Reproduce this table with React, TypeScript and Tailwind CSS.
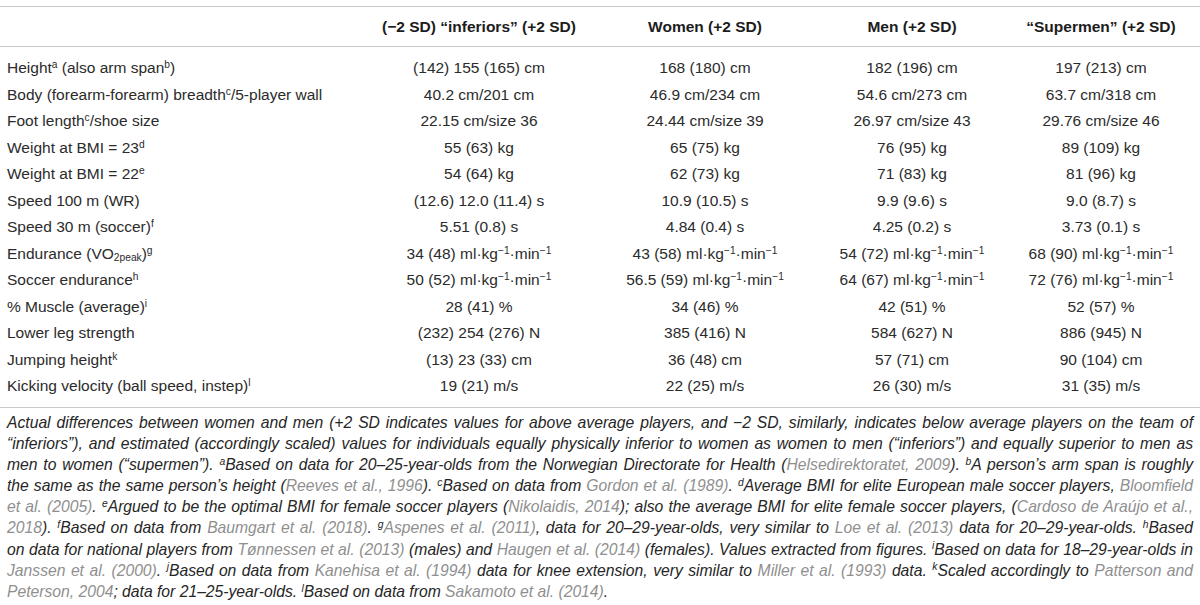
import type { ReactNode } from "react";

type Row = { label: ReactNode; values: ReactNode[] };

const Sup = ({ children }: { children: ReactNode }) => (
  <sup className="text-[0.66em]">{children}</sup>
);

const Rate = ({ v }: { v: string }) => (
  <>
    {v} ml·kg<Sup>−1</Sup>·min<Sup>−1</Sup>
  </>
);

const ROWS: Row[] = [
  {
    label: (
      <>
        Height<Sup>a</Sup> (also arm span<Sup>b</Sup>)
      </>
    ),
    values: ["(142) 155 (165) cm", "168 (180) cm", "182 (196) cm", "197 (213) cm"],
  },
  {
    label: (
      <>
        Body (forearm-forearm) breadth<Sup>c</Sup>/5-player wall
      </>
    ),
    values: ["40.2 cm/201 cm", "46.9 cm/234 cm", "54.6 cm/273 cm", "63.7 cm/318 cm"],
  },
  {
    label: (
      <>
        Foot length<Sup>c</Sup>/shoe size
      </>
    ),
    values: ["22.15 cm/size 36", "24.44 cm/size 39", "26.97 cm/size 43", "29.76 cm/size 46"],
  },
  {
    label: (
      <>
        Weight at BMI = 23<Sup>d</Sup>
      </>
    ),
    values: ["55 (63) kg", "65 (75) kg", "76 (95) kg", "89 (109) kg"],
  },
  {
    label: (
      <>
        Weight at BMI = 22<Sup>e</Sup>
      </>
    ),
    values: ["54 (64) kg", "62 (73) kg", "71 (83) kg", "81 (96) kg"],
  },
  {
    label: "Speed 100 m (WR)",
    values: ["(12.6) 12.0 (11.4) s", "10.9 (10.5) s", "9.9 (9.6) s", "9.0 (8.7) s"],
  },
  {
    label: (
      <>
        Speed 30 m (soccer)<Sup>f</Sup>
      </>
    ),
    values: ["5.51 (0.8) s", "4.84 (0.4) s", "4.25 (0.2) s", "3.73 (0.1) s"],
  },
  {
    label: (
      <>
        Endurance (VO<sub className="text-[0.66em]">2peak</sub>)<Sup>g</Sup>
      </>
    ),
    values: [
      <Rate v="34 (48)" />,
      <Rate v="43 (58)" />,
      <Rate v="54 (72)" />,
      <Rate v="68 (90)" />,
    ],
  },
  {
    label: (
      <>
        Soccer endurance<Sup>h</Sup>
      </>
    ),
    values: [
      <Rate v="50 (52)" />,
      <Rate v="56.5 (59)" />,
      <Rate v="64 (67)" />,
      <Rate v="72 (76)" />,
    ],
  },
  {
    label: (
      <>
        % Muscle (average)<Sup>i</Sup>
      </>
    ),
    values: ["28 (41) %", "34 (46) %", "42 (51) %", "52 (57) %"],
  },
  {
    label: "Lower leg strength",
    values: ["(232) 254 (276) N", "385 (416) N", "584 (627) N", "886 (945) N"],
  },
  {
    label: (
      <>
        Jumping height<Sup>k</Sup>
      </>
    ),
    values: ["(13) 23 (33) cm", "36 (48) cm", "57 (71) cm", "90 (104) cm"],
  },
  {
    label: (
      <>
        Kicking velocity (ball speed, instep)<Sup>l</Sup>
      </>
    ),
    values: ["19 (21) m/s", "22 (25) m/s", "26 (30) m/s", "31 (35) m/s"],
  },
];

const HEADERS = [
  "(−2 SD) “inferiors” (+2 SD)",
  "Women (+2 SD)",
  "Men (+2 SD)",
  "“Supermen” (+2 SD)",
];

const GRID = "grid grid-cols-[370px_218px_234px_180px_1fr]";

// citation links in the footnote are grey
const C = ({ children }: { children: ReactNode }) => (
  <span className="text-[#8f8f8f]">{children}</span>
);

const FOOT_LINES: ReactNode[] = [
  <>
    Actual differences between women and men (+2 SD indicates values for above average players, and −2 SD,
    similarly, indicates below average players on the team of
  </>,
  <>
    “inferiors”), and estimated (accordingly scaled) values for individuals equally physically inferior to women as
    women to men (“inferiors”) and equally superior to men as
  </>,
  <>
    men to women (“supermen”). <Sup>a</Sup>Based on data for 20–25-year-olds from the Norwegian Directorate for
    Health (<C>Helsedirektoratet, 2009</C>). <Sup>b</Sup>A person’s arm span is roughly
  </>,
  <>
    the same as the same person’s height (<C>Reeves et al., 1996</C>). <Sup>c</Sup>Based on data from{" "}
    <C>Gordon et al. (1989)</C>. <Sup>d</Sup>Average BMI for elite European male soccer players,{" "}
    <C>Bloomfield</C>
  </>,
  <>
    <C>et al. (2005)</C>. <Sup>e</Sup>Argued to be the optimal BMI for female soccer players (
    <C>Nikolaidis, 2014</C>); also the average BMI for elite female soccer players, (
    <C>Cardoso de Araújo et al.,</C>
  </>,
  <>
    <C>2018</C>). <Sup>f</Sup>Based on data from <C>Baumgart et al. (2018)</C>. <Sup>g</Sup>
    <C>Aspenes et al. (2011)</C>, data for 20–29-year-olds, very similar to <C>Loe et al. (2013)</C> data for
    20–29-year-olds. <Sup>h</Sup>Based
  </>,
  <>
    on data for national players from <C>Tønnessen et al. (2013)</C> (males) and <C>Haugen et al. (2014)</C>{" "}
    (females). Values extracted from figures. <Sup>i</Sup>Based on data for 18–29-year-olds in
  </>,
  <>
    <C>Janssen et al. (2000)</C>. <Sup>j</Sup>Based on data from <C>Kanehisa et al. (1994)</C> data for knee
    extension, very similar to <C>Miller et al. (1993)</C> data. <Sup>k</Sup>Scaled accordingly to{" "}
    <C>Patterson and</C>
  </>,
  <>
    <C>Peterson, 2004</C>; data for 21–25-year-olds. <Sup>l</Sup>Based on data from{" "}
    <C>Sakamoto et al. (2014)</C>.
  </>,
];

export default function App() {
  return (
    <div className="min-h-[605px] w-[1200px] bg-white pt-[6px] font-['Liberation_Sans',Arial,sans-serif] text-[#2b2b2b]">
      <div className="border-t border-[#c9c9c9]">
        <div className={`${GRID} h-[40px] items-center border-b border-[#c9c9c9] text-[15.5px] font-bold text-[#1c1c1c]`}>
          <span />
          {HEADERS.map((h) => (
            <span key={h} className="text-center whitespace-nowrap">
              {h}
            </span>
          ))}
        </div>

        <div className="border-b border-[#c9c9c9] py-[7.75px] text-[15.5px]">
          {ROWS.map((r, i) => (
            <div key={i} className={`${GRID} h-[26.5px] items-center leading-none`}>
              <span className="pl-[7px] whitespace-nowrap">{r.label}</span>
              {r.values.map((v, j) => (
                <span key={j} className="text-center whitespace-nowrap">
                  {v}
                </span>
              ))}
            </div>
          ))}
        </div>
      </div>

      <div className="px-[7px] pt-[4px] text-[15.7px] leading-[21.1px] italic text-[#262626]">
        {FOOT_LINES.map((line, i) => (
          <div
            key={i}
            className={i < FOOT_LINES.length - 1 ? "text-justify [text-align-last:justify]" : ""}
          >
            {line}
          </div>
        ))}
      </div>
    </div>
  );
}
